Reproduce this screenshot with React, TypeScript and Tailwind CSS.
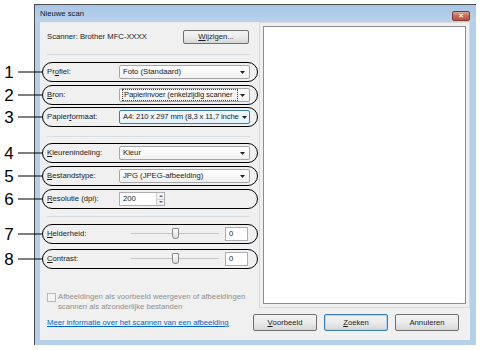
import type { ReactNode } from 'react'

const font = "font-['Liberation_Sans',Arial,sans-serif]"

// uitleg-nummer met lijn en ovaal rond een rij
function Callout({ n, children }: { n: number; children: ReactNode }) {
  return (
    <div className="relative">
      <div className="pointer-events-none absolute -left-[5px] -right-[8px] -top-[3px] -bottom-[3px] rounded-full border-[1.3px] border-black" />
      <div className="pointer-events-none absolute -left-[47px] top-1/2 flex -translate-y-1/2 items-center">
        <span className="w-[18px] text-center text-[17px] leading-none text-black">{n}</span>
        <span className="h-px w-[24px] bg-black" />
      </div>
      {children}
    </div>
  )
}

function Arrow() {
  return (
    <svg width="5" height="3" viewBox="0 0 5 3" className="shrink-0">
      <path d="M0 0h5L2.5 3z" fill="#222" />
    </svg>
  )
}

function Select({ text, state }: { text: string; state?: 'focus' | 'hover' }) {
  const box =
    state === 'hover'
      ? 'border-[#3c7fb1] bg-gradient-to-b from-[#f4fafe] to-[#e3f2fb]'
      : 'border-[#a5a5a5] bg-gradient-to-b from-white to-[#f1f1f1]'
  return (
    <div className={`flex h-[14px] w-[131px] items-center gap-[2px] rounded-[2px] border pl-[2px] pr-[4px] ${box}`}>
      <span
        className={`flex-1 whitespace-nowrap leading-[10px] ${
          state ? 'tracking-[-0.15px]' : ''
        } ${state === 'focus' ? 'border border-dotted border-[#444] px-px' : 'px-px'}`}
      >
        {text}
      </span>
      <Arrow />
    </div>
  )
}

function Label({ pre, u, post, w = 'w-[72px]' }: { pre?: string; u: string; post: string; w?: string }) {
  return (
    <span className={`${w} shrink-0 whitespace-nowrap`}>
      {pre}
      <span className="underline">{u}</span>
      {post}
    </span>
  )
}

function SliderRow({ pre, u, post }: { pre?: string; u: string; post: string }) {
  return (
    <div className="flex h-[14px] items-center">
      <Label pre={pre} u={u} post={post} w="w-[84px]" />
      <div className="relative flex h-[12px] w-[88px] items-center">
        <div className="h-[2px] w-full border-t border-[#c4c4c4] border-b-white" />
        <div className="absolute left-[41px] top-0 h-[11px] w-[7px] rounded-b-[3px] rounded-t-[1px] border border-[#8a8a8a] bg-gradient-to-b from-white to-[#dedede]" />
      </div>
      <div className="ml-[6px] flex h-[14px] w-[23px] items-center border border-[#abadb3] bg-white pl-[3px]">0</div>
    </div>
  )
}

function Button({ pre, u, post, focus }: { pre?: string; u?: string; post: string; focus?: boolean }) {
  return (
    <div
      className={`flex h-[17px] w-[64px] items-center justify-center rounded-[2px] border bg-gradient-to-b from-[#f3f3f3] via-[#ebebeb] to-[#d6d6d6] ${
        focus ? 'border-[#3c7fb1] shadow-[inset_0_0_0_1px_#a8d8f5]' : 'border-[#707070]'
      }`}
    >
      {pre}
      {u && <span className="underline">{u}</span>}
      {post}
    </div>
  )
}

export default function App() {
  return (
    <div className={`h-[350px] w-[480px] overflow-hidden bg-white text-[7.7px] text-[#1a1a1a] ${font}`}>
      <div className="ml-[34px] pt-[4px]">
        <div className="flex h-[341px] w-[442px] flex-col border-l border-t border-[#4a4a4a] bg-[#b4cfea]">
          {/* titelbalk */}
          <div className="flex h-[17px] items-center justify-between bg-gradient-to-b from-[#a7c5e4] to-[#b9d3ec] pl-[5px] pr-[6px]">
            <span className="mt-[1px] text-[#101820]">Nieuwe scan</span>
            <div className="mt-[4px] flex h-[10px] w-[18px] items-center justify-center rounded-[2px] border border-[#7d3a34] bg-gradient-to-b from-[#dfa294] via-[#c96a58] to-[#b85444]">
              <span className="text-[8px] font-bold leading-none text-white">×</span>
            </div>
          </div>

          <div className="ml-[5px] mr-[6px] flex h-[318px] bg-[#f0f0f0]">
            {/* linker kolom */}
            <div className="flex w-[219px] flex-col pl-[7px] pr-[9px]">
              <div className="mt-[8px] flex h-[14px] items-center justify-between">
                <span>Scanner: Brother MFC-XXXX</span>
                <div className="mr-px flex h-[14px] w-[66px] items-center justify-center rounded-[2px] border border-[#707070] bg-gradient-to-b from-[#f3f3f3] via-[#ebebeb] to-[#d6d6d6]">
                  <span className="underline">W</span>ijzigen...
                </div>
              </div>
              <div className="mt-[10px] h-px bg-[#d6dde3]" />

              <div className="mt-[10px]">
                <Callout n={1}>
                  <div className="flex h-[14px] items-center">
                    <Label pre="Pr" u="o" post="fiel:" />
                    <Select text="Foto (Standaard)" />
                  </div>
                </Callout>
              </div>
              <div className="mt-[9px]">
                <Callout n={2}>
                  <div className="flex h-[14px] items-center">
                    <Label u="B" post="ron:" />
                    <Select text="Papierinvoer (enkelzijdig scanner" state="focus" />
                  </div>
                </Callout>
              </div>
              <div className="mt-[8px]">
                <Callout n={3}>
                  <div className="flex h-[14px] items-center">
                    <Label pre="Papier" u="f" post="ormaat:" />
                    <Select text="A4: 210 x 297 mm (8,3 x 11,7 inche" state="hover" />
                  </div>
                </Callout>
              </div>
              <div className="mt-[12px] h-px bg-[#d6dde3]" />

              <div className="mt-[9px]">
                <Callout n={4}>
                  <div className="flex h-[14px] items-center">
                    <Label u="K" post="leurenindeling:" />
                    <Select text="Kleur" />
                  </div>
                </Callout>
              </div>
              <div className="mt-[9px]">
                <Callout n={5}>
                  <div className="flex h-[14px] items-center">
                    <Label u="B" post="estandstype:" />
                    <Select text="JPG (JPEG-afbeelding)" />
                  </div>
                </Callout>
              </div>
              <div className="mt-[9px]">
                <Callout n={6}>
                  <div className="flex h-[14px] items-center">
                    <Label u="R" post="esolutie (dpi):" />
                    <div className="flex h-[14px] w-[46px] border border-[#abadb3] bg-white">
                      <span className="flex-1 pl-[3px] leading-[12px]">200</span>
                      <div className="flex w-[8px] flex-col border-l border-[#d0d0d0]">
                        <div className="flex flex-1 items-center justify-center border-b border-[#d0d0d0] bg-[#f2f2f2]">
                          <svg width="4" height="2" viewBox="0 0 4 2"><path d="M0 2h4L2 0z" fill="#666" /></svg>
                        </div>
                        <div className="flex flex-1 items-center justify-center bg-[#f2f2f2]">
                          <svg width="4" height="2" viewBox="0 0 4 2"><path d="M0 0h4L2 2z" fill="#666" /></svg>
                        </div>
                      </div>
                    </div>
                  </div>
                </Callout>
              </div>
              <div className="mt-[10px] h-px bg-[#d6dde3]" />

              <div className="mt-[10px]">
                <Callout n={7}>
                  <SliderRow u="H" post="elderheid:" />
                </Callout>
              </div>
              <div className="mt-[11px]">
                <Callout n={8}>
                  <SliderRow u="C" post="ontrast:" />
                </Callout>
              </div>

              <div className="mt-[26px] flex gap-[2px] leading-[10px] text-[#8e8e8e]">
                <div className="mt-[1px] h-[9px] w-[9px] shrink-0 border border-[#b8b8b8] bg-[#f4f4f4]" />
                <div>
                  Afbeeldingen als voorbeeld weergeven of afbeeldingen
                  <br />
                  scannen als afzonderlijke bestanden
                </div>
              </div>
              <div className="mt-[6px] whitespace-nowrap leading-[10px] text-[#0066cc] underline">
                Meer informatie over het scannen van een afbeelding
              </div>
            </div>

            {/* voorbeeldvenster en knoppen */}
            <div className="flex flex-1 flex-col">
              <div className="flex h-[286px] border border-[#dadada] p-[3px]">
                <div className="flex-1 border border-[#8a8d92] bg-white" />
              </div>
              <div className="-ml-[6px] mt-[6px] flex gap-[7px]">
                <Button u="V" post="oorbeeld" />
                <Button u="Z" post="oeken" focus />
                <Button post="Annuleren" />
              </div>
            </div>
          </div>
        </div>
      </div>
    </div>
  )
}
